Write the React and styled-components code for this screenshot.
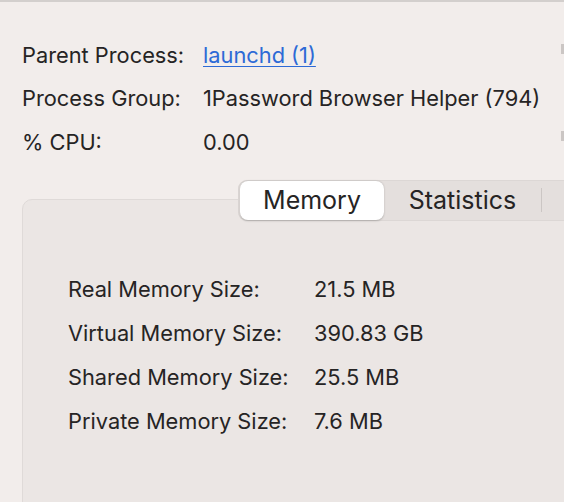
import React from 'react'
import styled, { createGlobalStyle } from 'styled-components'

const GlobalStyle = createGlobalStyle`
  html, body {
    margin: 0;
    padding: 0;
    background: #f2edeb;
    overflow: hidden;
  }

  body {
    font-family: Inter, "Noto Sans", "Liberation Sans", sans-serif;
    color: #262424;
    -webkit-font-smoothing: antialiased;
  }
`

const info = [
  { label: 'Parent Process:', value: 'launchd (1)', link: true, edge: true },
  { label: 'Process Group:', value: '1Password Browser Helper (794)' },
  { label: '% CPU:', value: '0.00', edge: true },
]

const memory = [
  { label: 'Real Memory Size:', value: '21.5 MB' },
  { label: 'Virtual Memory Size:', value: '390.83 GB' },
  { label: 'Shared Memory Size:', value: '25.5 MB' },
  { label: 'Private Memory Size:', value: '7.6 MB' },
]

function App() {
  return (
    <>
      <GlobalStyle />
      <Window>
        <InfoGrid>
          {info.map((row) => (
            <React.Fragment key={row.label}>
              <Label>{row.label}</Label>
              {row.link ? <Link href="#">{row.value}</Link> : <Label>{row.value}</Label>}
              <Edge $visible={row.edge} />
            </React.Fragment>
          ))}
        </InfoGrid>

        <TabSection>
          <Segmented>
            <Segment $active>Memory</Segment>
            <Segment>Statistics</Segment>
            <Divider />
          </Segmented>
          <Panel>
            <MemoryGrid>
              {memory.map((row) => (
                <React.Fragment key={row.label}>
                  <Label>{row.label}</Label>
                  <Label>{row.value}</Label>
                </React.Fragment>
              ))}
            </MemoryGrid>
          </Panel>
        </TabSection>
      </Window>
    </>
  )
}

export default App

const Window = styled.div`
  width: 564px;
  height: 502px;
  border-top: 2px solid #d3cfcd;
  box-sizing: border-box;
  overflow: hidden;
`

const InfoGrid = styled.div`
  display: grid;
  grid-template-columns: 181px 1fr 3px;
  grid-auto-rows: 43.5px;
  align-items: center;
  padding: 32px 0 0 22px;
`

const Label = styled.span`
  font-size: 21.8px;
  line-height: 1;
  white-space: nowrap;
`

const Link = styled.a`
  font-size: 21.8px;
  line-height: 1;
  color: #2d6ad6;
  text-decoration: underline;
  text-underline-offset: 3px;
  text-decoration-thickness: 1px;
  justify-self: start;
`

const Edge = styled.span`
  align-self: start;
  margin-top: 10px;
  width: 3px;
  height: 10px;
  background: ${(p) => (p.$visible ? '#cbc6c4' : 'transparent')};
`

const TabSection = styled.div`
  display: flex;
  flex-direction: column;
  margin: 15px 0 0 22px;
`

const Segmented = styled.div`
  position: relative;
  z-index: 1;
  display: flex;
  align-items: center;
  align-self: flex-start;
  width: 420px;
  margin: 0 0 -22px 216px;
  padding: 1px 2px;
  height: 41px;
  box-sizing: border-box;
  background: #e4dfdd;
  border-radius: 9px;
  box-shadow: inset 0 0 0 1px #dcd7d5;
  white-space: nowrap;
`

const Segment = styled.div`
  display: flex;
  align-items: center;
  justify-content: center;
  height: 39px;
  box-sizing: border-box;
  width: ${(p) => (p.$active ? '144px' : '157px')};
  font-size: 25px;
  border-radius: 8px;
  background: ${(p) => (p.$active ? '#ffffff' : 'transparent')};
  box-shadow: ${(p) => (p.$active ? '0 0.5px 2px rgba(0, 0, 0, 0.22)' : 'none')};
`

const Divider = styled.span`
  width: 1px;
  height: 24px;
  background: #cbc6c4;
`

const Panel = styled.div`
  width: 620px;
  height: 340px;
  background: #ebe6e4;
  border: 1px solid #dfdad8;
  border-radius: 10px;
`

const MemoryGrid = styled.div`
  display: grid;
  grid-template-columns: 246px 1fr;
  grid-auto-rows: 44px;
  align-items: center;
  padding: 68px 0 0 45px;
`
